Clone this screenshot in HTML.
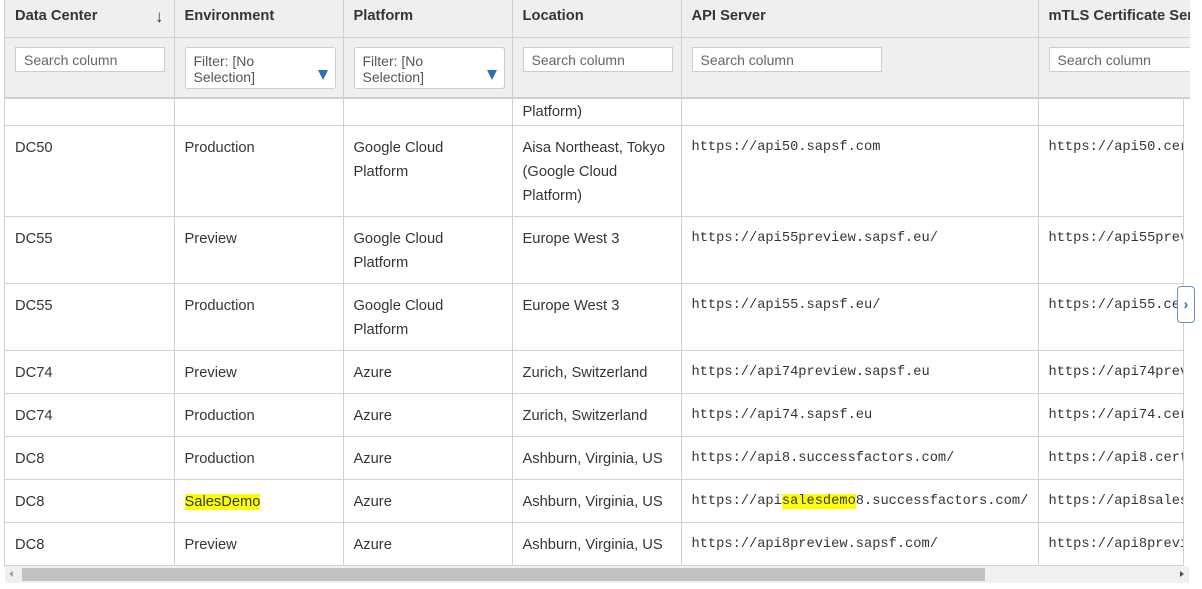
<!DOCTYPE html>
<html><head><style>
body{margin:0;width:1202px;height:589px;background:#fff;overflow:hidden;font-family:"Liberation Sans",Arial,sans-serif;color:#32363a;position:relative}
#wrap{position:absolute;left:4px;top:0;width:1185px;height:566px;overflow:hidden;border-left:1px solid #d0d0d0}
table{border-collapse:collapse;table-layout:fixed;position:absolute;left:0}
td,th{border-right:1px solid #d0d0d0;border-bottom:1px solid #d0d0d0;vertical-align:top;text-align:left;padding:0 10px;font-size:14.7px;line-height:24px;overflow:hidden;white-space:nowrap}
th{background:#efefef;font-weight:bold;height:37px;line-height:33px;padding-top:0}
.f td{background:#efefef;height:60px;padding-top:9px;box-sizing:border-box;border-bottom:2px solid #d0d0d0}
.s{border:1px solid #ccc;background:#fff;height:25px;box-sizing:border-box;width:150px;font-size:14px;color:#666;padding-left:8px;line-height:24px}
.sel{border:1px solid #ccc;border-radius:3px;background:#fff;height:42px;box-sizing:border-box;width:151px;font-size:14px;color:#555;padding:5px 60px 4px 8px;line-height:16px;white-space:normal;position:relative}
.sel:after{content:"";position:absolute;right:7px;bottom:8px;border-left:5px solid transparent;border-right:5px solid transparent;border-top:10px solid #2a6fb8}
tbody td{padding-top:10px;box-sizing:border-box}
.m{font-family:"Liberation Mono",monospace;font-size:13.7px}
.hl{background:#ffff00}
#body td{white-space:normal}
#body td.m{white-space:nowrap}
</style></head><body>
<div id="wrap">
<table style="top:0;width:1380px">
<colgroup><col style="width:169px"><col style="width:169px"><col style="width:169px"><col style="width:169px"><col style="width:357px"><col style="width:347px"></colgroup>
<tr><th>Data Center<span style="float:right;font-size:17px;font-weight:normal">&#8595;</span></th><th>Environment</th><th>Platform</th><th>Location</th><th>API Server</th><th>mTLS Certificate Server</th></tr>
<tr class="f"><td><div class="s">Search column</div></td><td><div class="sel">Filter: [No Selection]</div></td><td><div class="sel">Filter: [No Selection]</div></td><td><div class="s">Search column</div></td><td><div class="s" style="width:190px">Search column</div></td><td><div class="s" style="width:200px">Search column</div></td></tr>
</table>
<div style="position:absolute;left:0;top:98px;width:1178px;height:468px;overflow:hidden;border-right:1px solid #d0d0d0">
<table id="body" style="top:-66px;width:1380px">
<colgroup><col style="width:169px"><col style="width:169px"><col style="width:169px"><col style="width:169px"><col style="width:357px"><col style="width:347px"></colgroup>
<tr style="height:93px"><td></td><td></td><td></td><td style="padding-top:20px">Aisa Northeast, Tokyo (Google Cloud Platform)</td><td></td><td></td></tr>
<tr style="height:91px"><td>DC50</td><td>Production</td><td>Google Cloud Platform</td><td>Aisa Northeast, Tokyo (Google Cloud Platform)</td><td class="m">https://api50.sapsf.com</td><td class="m">https://api50.cert.sapsf.com</td></tr>
<tr style="height:67px"><td>DC55</td><td>Preview</td><td>Google Cloud Platform</td><td>Europe West 3</td><td class="m">https://api55preview.sapsf.eu/</td><td class="m">https://api55preview.cert.sapsf.eu</td></tr>
<tr style="height:67px"><td>DC55</td><td>Production</td><td>Google Cloud Platform</td><td>Europe West 3</td><td class="m">https://api55.sapsf.eu/</td><td class="m">https://api55.cert.sapsf.eu</td></tr>
<tr style="height:43px"><td>DC74</td><td>Preview</td><td>Azure</td><td>Zurich, Switzerland</td><td class="m">https://api74preview.sapsf.eu</td><td class="m">https://api74preview.cert</td></tr>
<tr style="height:43px"><td>DC74</td><td>Production</td><td>Azure</td><td>Zurich, Switzerland</td><td class="m">https://api74.sapsf.eu</td><td class="m">https://api74.cert</td></tr>
<tr style="height:43px"><td>DC8</td><td>Production</td><td>Azure</td><td>Ashburn, Virginia, US</td><td class="m">https://api8.successfactors.com/</td><td class="m">https://api8.cert</td></tr>
<tr style="height:43px"><td>DC8</td><td><span class="hl">SalesDemo</span></td><td>Azure</td><td>Ashburn, Virginia, US</td><td class="m">https://api<span class="hl">salesdemo</span>8.successfactors.com/</td><td class="m">https://api8salesdemo</td></tr>
<tr style="height:43px"><td>DC8</td><td>Preview</td><td>Azure</td><td>Ashburn, Virginia, US</td><td class="m">https://api8preview.sapsf.com/</td><td class="m">https://api8preview</td></tr>
</table>
</div>
</div>
<div style="position:absolute;left:1177px;top:286px;width:18px;height:37px;border:1px solid #6a8fc0;border-radius:4px;background:#fff;box-sizing:border-box;color:#2a6fb8;font-size:14px;font-weight:bold;text-align:center;line-height:34px">&#8250;</div>
<div style="position:absolute;left:5px;top:566px;width:1184px;height:17px;background:#f0f0f0"></div>
<div style="position:absolute;left:22px;top:568px;width:963px;height:13px;background:#c1c1c1"></div>
<div style="position:absolute;left:9px;top:571px;border-top:3px solid transparent;border-bottom:3px solid transparent;border-right:4px solid #a0a0a0"></div>
<div style="position:absolute;left:1180px;top:571px;border-top:3px solid transparent;border-bottom:3px solid transparent;border-left:4px solid #505050"></div>
</body></html>
